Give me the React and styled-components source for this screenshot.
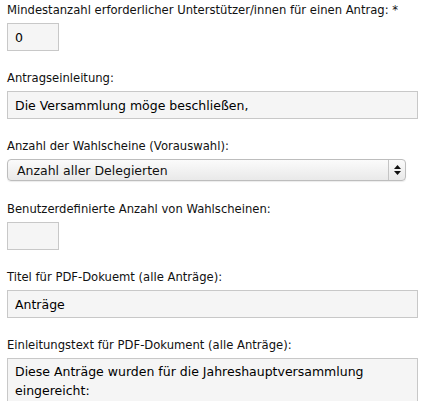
import React from "react";
import styled, { createGlobalStyle } from "styled-components";

const Global = createGlobalStyle`
  html, body { margin: 0; padding: 0; background: #fff; }
  body { font-family: "DejaVu Sans", Verdana, sans-serif; color: #111; }
`;

const Form = styled.div`
  padding: 2px 15px 0 7px;
  display: flex;
  flex-direction: column;
`;

const Field = styled.div`
  display: flex;
  flex-direction: column;
  margin-bottom: 19px;
`;

const Label = styled.label`
  font-size: 11.6px;
  line-height: 16px;
  margin-bottom: 5px;
  color: #111;
`;

const Input = styled.input`
  box-sizing: border-box;
  width: ${(p) => (p.$small ? "52px" : "411px")};
  height: 28px;
  border: 1px solid #c8c8c8;
  background: #f5f5f5;
  font-family: "DejaVu Sans", Verdana, sans-serif;
  font-size: 12.5px;
  padding: 0 7px;
  color: #000;
  outline: none;
`;

const TextArea = styled.textarea`
  box-sizing: border-box;
  width: 411px;
  height: 80px;
  border: 1px solid #c8c8c8;
  background: #f5f5f5;
  font-family: "DejaVu Sans", Verdana, sans-serif;
  font-size: 12.5px;
  line-height: 19px;
  padding: 3px 7px;
  color: #000;
  resize: none;
  outline: none;
`;

const SelectBox = styled.div`
  box-sizing: border-box;
  width: 399px;
  height: 22px;
  border: 1px solid #bdbdbd;
  border-radius: 4px;
  background: linear-gradient(#fbfbfb, #e9e9e9);
  display: flex;
  align-items: center;
  font-size: 12.5px;
  margin-bottom: 1px;
  box-shadow: 0 1px 1px rgba(0, 0, 0, 0.08);
`;

const SelectText = styled.span`
  flex: 1;
  padding-left: 9px;
`;

const Arrows = styled.span`
  width: 16px;
  height: 100%;
  border-left: 1px solid #c4c4c4;
  display: flex;
  align-items: center;
  justify-content: center;
`;

export default function App() {
  return (
    <>
      <Global />
      <Form>
        <Field>
          <Label>Mindestanzahl erforderlicher Unterstützer/innen für einen Antrag: *</Label>
          <Input $small defaultValue="0" />
        </Field>
        <Field>
          <Label>Antragseinleitung:</Label>
          <Input defaultValue="Die Versammlung möge beschließen," />
        </Field>
        <Field>
          <Label>Anzahl der Wahlscheine (Vorauswahl):</Label>
          <SelectBox>
            <SelectText>Anzahl aller Delegierten</SelectText>
            <Arrows>
              <svg width="7" height="10" viewBox="0 0 7 10">
                <path d="M3.5 0 L7 4 H0 Z M0 6 H7 L3.5 10 Z" fill="#111" />
              </svg>
            </Arrows>
          </SelectBox>
        </Field>
        <Field>
          <Label>Benutzerdefinierte Anzahl von Wahlscheinen:</Label>
          <Input $small />
        </Field>
        <Field>
          <Label>Titel für PDF-Dokuemt (alle Anträge):</Label>
          <Input defaultValue="Anträge" />
        </Field>
        <Field>
          <Label>Einleitungstext für PDF-Dokument (alle Anträge):</Label>
          <TextArea defaultValue={"Diese Anträge wurden für die Jahreshauptversammlung eingereicht:"} />
        </Field>
      </Form>
    </>
  );
}
